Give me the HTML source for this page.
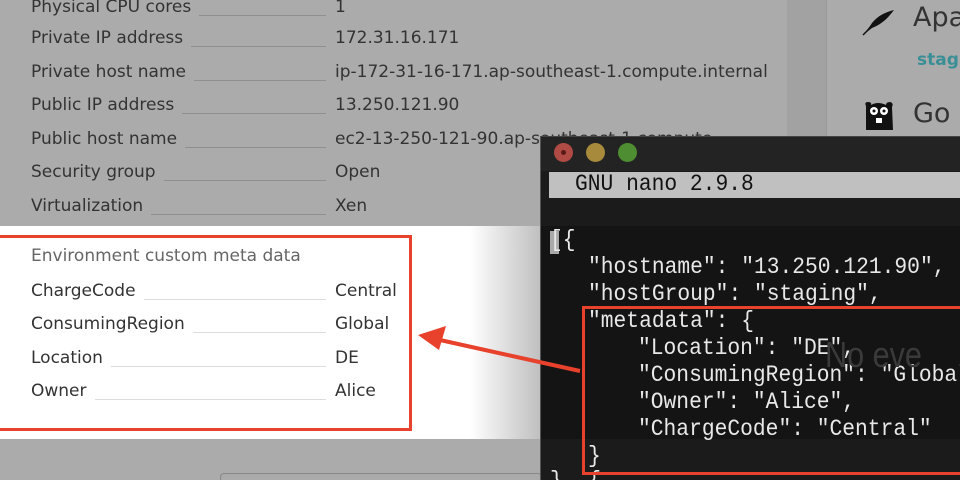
<!DOCTYPE html>
<html style="overflow:hidden;width:960px;height:480px"><head><style>
body{margin:0;width:960px;height:480px;overflow:hidden;background:#ababab;position:relative;font-family:"DejaVu Sans","Liberation Sans",sans-serif;}
.a{position:absolute;white-space:nowrap}
.r{position:absolute;left:31px;width:295px;font-size:17px;color:#333;height:24px;display:flex;white-space:nowrap}
.r .d{flex:1;height:1px;background:#8f8f8f;margin:18px 0 0 8px}
.r .v{position:absolute;left:304px;top:0}
.w .d{background:#ddd}
.t{position:absolute;font-family:"Liberation Mono",monospace;font-size:23px;color:#e8e8e8;letter-spacing:0px;white-space:pre;transform:scaleX(.925);transform-origin:left}
</style></head><body>
<div class="a" style="left:787px;top:0;width:40px;height:226px;background:#a2a2a2"></div>
<div class="a" style="left:826px;top:0;width:1px;height:226px;background:#9a9a9a"></div>
<div class="a" style="left:913px;top:2px;font-size:27px;color:#333">Apa</div>
<div class="a" style="left:917px;top:50px;font-size:17px;color:#3a8e96;font-weight:bold">stagi</div>
<div class="a" style="left:913px;top:98px;font-size:27px;color:#333">Go</div>
<svg class="a" style="left:862px;top:8px" width="34" height="28"><path d="M2 26 L8 18 C14 8 24 4 32 2 C26 10 20 16 10 20 Z" fill="#111"/><path d="M1 27 L12 16" stroke="#111" stroke-width="1.5"/></svg>
<svg class="a" style="left:862px;top:100px" width="34" height="32"><path d="M4 6 Q2 2 6 2 Q10 2 9 5 Q16 1 24 5 Q24 2 28 2 Q32 3 30 7 L31 30 L4 30 Z" fill="#111"/><circle cx="12" cy="11" r="4" fill="#fff"/><circle cx="22" cy="11" r="4" fill="#fff"/><circle cx="12" cy="11" r="1.5" fill="#111"/><circle cx="22" cy="11" r="1.5" fill="#111"/><rect x="14" y="18" width="6" height="5" fill="#fff"/></svg>

<div class="r" style="top:-3px"><span>Physical CPU cores</span><span class="d"></span><span class="v">1</span></div>
<div class="r" style="top:28px"><span>Private IP address</span><span class="d"></span><span class="v">172.31.16.171</span></div>
<div class="r" style="top:62px"><span>Private host name</span><span class="d"></span><span class="v">ip-172-31-16-171.ap-southeast-1.compute.internal</span></div>
<div class="r" style="top:95px"><span>Public IP address</span><span class="d"></span><span class="v">13.250.121.90</span></div>
<div class="r" style="top:129px"><span>Public host name</span><span class="d"></span><span class="v">ec2-13-250-121-90.ap-southeast-1.compute</span></div>
<div class="r" style="top:162px"><span>Security group</span><span class="d"></span><span class="v">Open</span></div>
<div class="r" style="top:196px"><span>Virtualization</span><span class="d"></span><span class="v">Xen</span></div>

<div class="a" style="left:0;top:226px;width:545px;height:213px;background:linear-gradient(90deg,#fff 0,#fff 470px,#bbb 545px)"></div>
<div class="a" style="left:220px;top:473px;width:320px;height:20px;border:1px solid #888;border-radius:4px;background:#aaa"></div>
<div class="a" style="left:0;top:235px;width:409px;height:190px;border:3px solid #e8412c;border-left:none"></div>
<div class="a" style="left:31px;top:246px;font-size:17px;color:#666">Environment custom meta data</div>
<div class="r w" style="top:281px"><span>ChargeCode</span><span class="d"></span><span class="v">Central</span></div>
<div class="r w" style="top:314px"><span>ConsumingRegion</span><span class="d"></span><span class="v">Global</span></div>
<div class="r w" style="top:348px"><span>Location</span><span class="d"></span><span class="v">DE</span></div>
<div class="r w" style="top:381px"><span>Owner</span><span class="d"></span><span class="v">Alice</span></div>

<div class="a" style="left:540px;top:136px;width:420px;height:344px;background:#1b1b1b;border-left:1px solid #555;border-top:1px solid #444"></div>
<div class="a" style="left:541px;top:137px;width:419px;height:34px;background:#232323"></div>
<div class="a" style="left:554px;top:143px;width:19px;height:19px;border-radius:50%;background:#b04a44"></div>
<div class="a" style="left:561px;top:150px;width:5px;height:5px;border-radius:50%;background:#5a1a16"></div>
<div class="a" style="left:586px;top:143px;width:19px;height:19px;border-radius:50%;background:#a88a3c"></div>
<div class="a" style="left:618px;top:143px;width:19px;height:19px;border-radius:50%;background:#4e8d32"></div>
<div class="a" style="left:549px;top:172px;width:411px;height:26px;background:#c0c0c0"></div>
<div class="t" style="left:575px;top:171px;color:#111">GNU nano 2.9.8</div>
<div class="a" style="left:541px;top:226px;width:419px;height:213px;background:#141414"></div>
<div class="a" style="left:550px;top:231px;width:9px;height:23px;background:#aaa"></div>
<div class="t" style="left:550px;top:227px">[{</div>
<div class="t" style="left:588px;top:254px">"hostname": "13.250.121.90",</div>
<div class="t" style="left:588px;top:281px">"hostGroup": "staging",</div>
<div class="t" style="left:588px;top:308px">"metadata": {</div>
<div class="t" style="left:638px;top:335px">"Location": "DE",</div>
<div class="t" style="left:638px;top:362px">"ConsumingRegion": "Global"</div>
<div class="t" style="left:638px;top:389px">"Owner": "Alice",</div>
<div class="t" style="left:638px;top:416px">"ChargeCode": "Central"</div>
<div class="t" style="left:588px;top:443px">}</div>
<div class="t" style="left:550px;top:468px">}, {</div>
<div class="a" style="left:825px;top:334px;font-size:36px;color:#3a3a3a;font-family:'Liberation Sans',sans-serif;transform:scaleX(.85);transform-origin:left">No eve</div>
<div class="a" style="left:582px;top:306px;width:380px;height:163px;border:3px solid #e8412c;border-right:none"></div>
<svg class="a" style="left:0;top:0" width="960" height="480"><line x1="580" y1="371" x2="440" y2="340" stroke="#e8412c" stroke-width="4"/><polygon points="418,335 446,326 439,350" fill="#e8412c"/></svg>
</body></html>
